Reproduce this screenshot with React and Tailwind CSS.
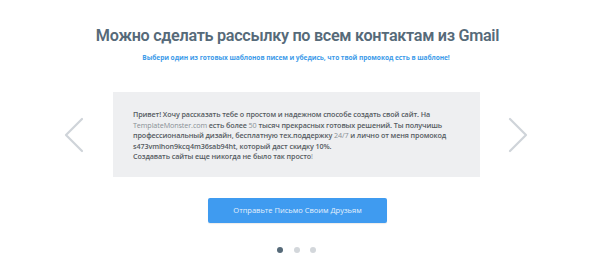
import React from 'react';

const Chevron = ({ dir }) => (
  <svg width="22" height="36" viewBox="0 0 22 36" fill="none" stroke="#cfd4d9" strokeWidth="2.2" strokeLinecap="round" strokeLinejoin="round">
    {dir === 'left' ? <polyline points="19,2 3,18 19,34" /> : <polyline points="3,2 19,18 3,34" />}
  </svg>
);

export default function App() {
  return (
    <div className="w-[604px] h-[270px] bg-white overflow-hidden" style={{ fontFamily: '"Open Sans", Roboto, sans-serif' }}>
      <div className="pt-[25px] text-center">
        <h1 className="pr-[9px] text-[16.2px] leading-[22px] font-semibold text-[#566a79] tracking-[-0.3px]" style={{ fontFamily: 'Roboto, sans-serif' }}>
          Можно сделать рассылку по всем контактам из Gmail
        </h1>
        <p className="mt-[5px] pr-[12px] text-[6.6px] leading-[12px] font-bold text-[#3d9be9] tracking-[-0.05px]">
          Выбери один из готовых шаблонов писем и убедись, что твой промокод есть в шаблоне!
        </p>
      </div>

      <div className="mt-[28px] flex items-center">
        <div className="w-[113px] pl-[63px]">
          <Chevron dir="left" />
        </div>
        <div className="w-[367px] h-[85px] bg-[#eeeff1] pl-[20px] pr-[18px] pt-[17px] text-[7.2px] leading-[10.5px] text-[#555b61] font-semibold tracking-[-0.1px]">
          Привет! Хочу рассказать тебе о простом и надежном способе создать свой сайт. На{' '}
          <span className="font-normal text-[#8a9096]">TemplateMonster.com</span> есть более{' '}
          <span className="font-normal text-[#8a9096]">50</span> тысяч прекрасных готовых решений. Ты получишь
          профессиональный дизайн, бесплатную тех.поддержку <span className="font-normal text-[#8a9096]">24/7</span> и лично от меня промокод
          <br />
          s473vmihon9kcq4m36sab94ht, который даст скидку 10%.
          <br />
          Создавать сайты еще никогда не было так просто<span className="font-normal text-[#8a9096]">!</span>
        </div>
        <div className="flex-1 pl-[27px]">
          <Chevron dir="right" />
        </div>
      </div>

      <div className="mt-[21px] flex justify-center">
        <button className="ml-[-9px] w-[179px] h-[25px] rounded-[2px] bg-[#3f9bf0] text-[7.5px] text-[#e4f0fc] shadow-[0_1px_1px_rgba(0,0,0,0.08)]">
          Отправьте Письмо Своим Друзьям
        </button>
      </div>

      <div className="mt-[24px] ml-[-11px] flex justify-center gap-[10.5px]">
        <span className="w-[6px] h-[6px] rounded-full bg-[#566a79]" />
        <span className="w-[6px] h-[6px] rounded-full bg-[#d3d7db]" />
        <span className="w-[6px] h-[6px] rounded-full bg-[#d3d7db]" />
      </div>
    </div>
  );
}
